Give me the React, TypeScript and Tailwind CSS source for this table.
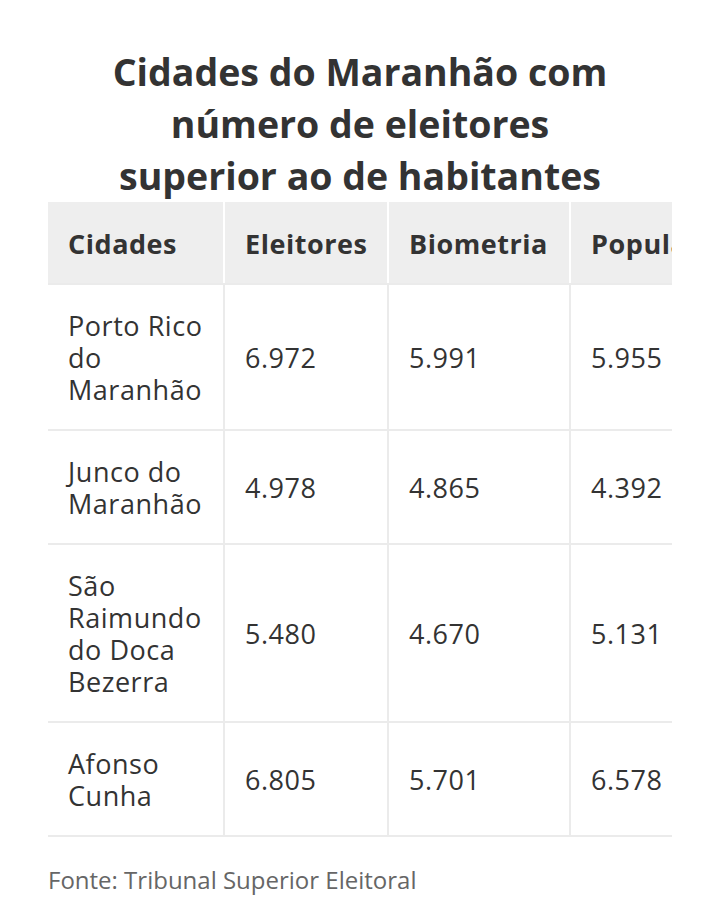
const rows = [
  { city: 'Porto Rico do Maranhão', eleitores: '6.972', biometria: '5.991', populacao: '5.955' },
  { city: 'Junco do Maranhão', eleitores: '4.978', biometria: '4.865', populacao: '4.392' },
  { city: 'São Raimundo do Doca Bezerra', eleitores: '5.480', biometria: '4.670', populacao: '5.131' },
  { city: 'Afonso Cunha', eleitores: '6.805', biometria: '5.701', populacao: '6.578' },
];

export default function App() {
  return (
    <div className="min-h-screen bg-white text-[#333333]" style={{ fontFamily: '"Open Sans", sans-serif' }}>
      <div className="px-12 pt-[46px]">
        <h1 className="text-center text-[37.5px] font-bold leading-[52px]">
          Cidades do Maranhão com
          <br />
          número de eleitores
          <br />
          superior ao de habitantes
        </h1>

        {/* Table, clipped at the right edge */}
        <div className="w-[624px] overflow-hidden">
          <table className="table-fixed border-separate border-spacing-0 w-[720px] text-[27px] leading-[32px] tracking-[0.02em]">
            <colgroup>
              <col className="w-[177px]" />
              <col className="w-[164px]" />
              <col className="w-[182px]" />
              <col className="w-[197px]" />
            </colgroup>
            <thead>
              <tr className="bg-[#eeeeee]">
                <th className="border-r-2 border-white pl-5 pr-1 pt-[26px] pb-[23px] text-left font-bold">Cidades</th>
                <th className="border-r-2 border-white pl-5 pr-1 pt-[26px] pb-[23px] text-left font-bold">Eleitores</th>
                <th className="border-r-2 border-white pl-5 pr-1 pt-[26px] pb-[23px] text-left font-bold">Biometria</th>
                <th className="pl-5 pr-1 pt-[26px] pb-[23px] text-left font-bold whitespace-nowrap">População</th>
              </tr>
            </thead>
            <tbody>
              {rows.map((r) => (
                <tr key={r.city}>
                  <td className="border-t-2 border-r-2 border-[#ebebeb] pl-5 pr-2 pt-[25px] pb-[23px] align-middle">{r.city}</td>
                  <td className="border-t-2 border-r-2 border-[#ebebeb] pl-5 pr-2 pt-[25px] pb-[23px] align-middle">{r.eleitores}</td>
                  <td className="border-t-2 border-r-2 border-[#ebebeb] pl-5 pr-2 pt-[25px] pb-[23px] align-middle">{r.biometria}</td>
                  <td className="border-t-2 border-[#ebebeb] pl-5 pr-2 pt-[25px] pb-[23px] align-middle">{r.populacao}</td>
                </tr>
              ))}
              <tr>
                <td colSpan={4} className="border-t-2 border-[#ebebeb] p-0 h-0"></td>
              </tr>
            </tbody>
          </table>
        </div>

        <p className="mt-[27px] text-[24px] leading-[32px] text-[#666666]">Fonte: Tribunal Superior Eleitoral</p>
      </div>
    </div>
  );
}
